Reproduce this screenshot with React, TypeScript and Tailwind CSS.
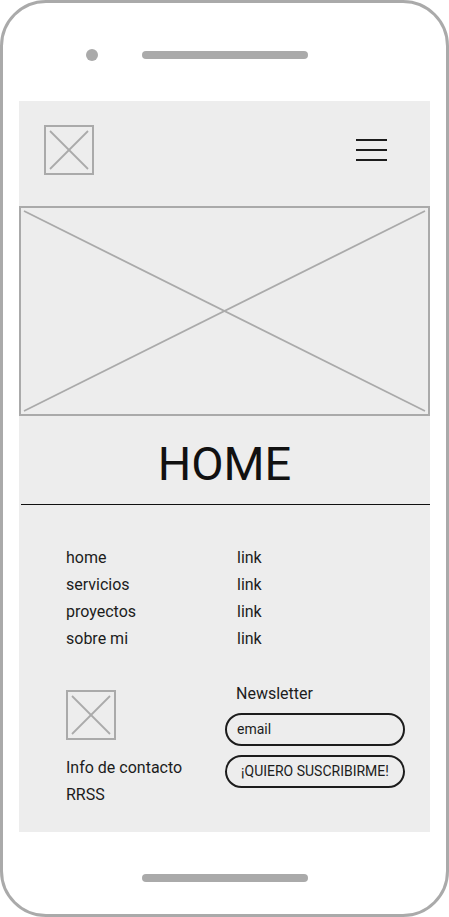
import React from "react";

// placeholder image box with the diagonal cross
function ImagePlaceholder({ className, inset = 4 }: { className: string; inset?: number }) {
    return (
        <div className={`relative border-2 border-[#aaaaaa] ${className}`}>
            <svg className="absolute inset-0 w-full h-full" preserveAspectRatio="none">
                <line x1={inset} y1={inset} x2={`calc(100% - ${inset}px)`} y2={`calc(100% - ${inset}px)`} stroke="#aaaaaa" strokeWidth="1.8" />
                <line x1={`calc(100% - ${inset}px)`} y1={inset} x2={inset} y2={`calc(100% - ${inset}px)`} stroke="#aaaaaa" strokeWidth="1.8" />
            </svg>
        </div>
    );
}

function HeroPlaceholder() {
    return (
        <div className="h-[210px] border-2 border-[#aaaaaa]">
            <svg className="w-full h-full" viewBox="0 0 407 206" preserveAspectRatio="none">
                <line x1="3" y1="3" x2="404" y2="203" stroke="#aaaaaa" strokeWidth="1.8" />
                <line x1="404" y1="3" x2="3" y2="203" stroke="#aaaaaa" strokeWidth="1.8" />
            </svg>
        </div>
    );
}

const navItems = ["home", "servicios", "proyectos", "sobre mi"];

export default function App() {
    return (
        <div
            className="w-[449px] h-[917px] border-[3px] border-[#aaaaaa] rounded-[46px] bg-white flex flex-col text-[#1c1c1c]"
            style={{ fontFamily: "Roboto, 'Liberation Sans', sans-serif" }}
        >
            {/* Top speaker */}
            <div className="h-[98px] flex items-start pt-[46px]">
                <div className="ml-[83px] w-[12px] h-[12px] rounded-full bg-[#aaaaaa]" />
                <div className="ml-[44px] mt-[2px] w-[166px] h-[8px] rounded-full bg-[#aaaaaa]" />
            </div>

            {/* Screen */}
            <div className="mx-[16px] h-[731px] bg-[#ededed] flex flex-col">
                {/* Header */}
                <div className="h-[105px] flex items-start justify-between pl-[25px] pr-[43px] pt-[24px]">
                    <ImagePlaceholder className="w-[50px] h-[50px]" />
                    <div className="mt-[14px] w-[31px] flex flex-col gap-[8px]">
                        <div className="h-[2px] bg-[#1c1c1c]" />
                        <div className="h-[2px] bg-[#1c1c1c]" />
                        <div className="h-[2px] bg-[#1c1c1c]" />
                    </div>
                </div>

                {/* Hero */}
                <HeroPlaceholder />

                {/* Title */}
                <div className="h-[88px] pt-[20px] text-center">
                    <h1 className="text-[47px] leading-[56px] text-[#111111]">HOME</h1>
                </div>
                <div className="ml-[2px] border-t border-[#111111]" />

                {/* Nav links */}
                <div className="pt-[39px] pl-[47px]">
                    {navItems.map((item) => (
                        <div key={item} className="flex text-[16px] leading-[27px]">
                            <span className="w-[171px]">{item}</span>
                            <span>link</span>
                        </div>
                    ))}
                </div>

                {/* Footer */}
                <div className="mt-[28px] pl-[47px] flex items-start">
                    <div className="w-[159px] mt-[10px]">
                        <ImagePlaceholder className="w-[50px] h-[50px]" />
                        <div className="mt-[14px] text-[16px] leading-[27px]">
                            <p>Info de contacto</p>
                            <p>RRSS</p>
                        </div>
                    </div>
                    <div className="w-[180px]">
                        <p className="pl-[11px] text-[16px] leading-[27px]">Newsletter</p>
                        <div className="mt-[6px] h-[33px] rounded-full border-2 border-[#1c1c1c] flex items-center pl-[10px] text-[14px]">
                            email
                        </div>
                        <button className="mt-[9px] w-full h-[33px] rounded-full border-2 border-[#1c1c1c] text-[14px] flex items-center justify-center">
                            ¡QUIERO SUSCRIBIRME!
                        </button>
                    </div>
                </div>
            </div>

            {/* Bottom bar */}
            <div className="mt-[42px] ml-[139px] w-[166px] h-[8px] rounded-full bg-[#aaaaaa]" />
        </div>
    );
}
